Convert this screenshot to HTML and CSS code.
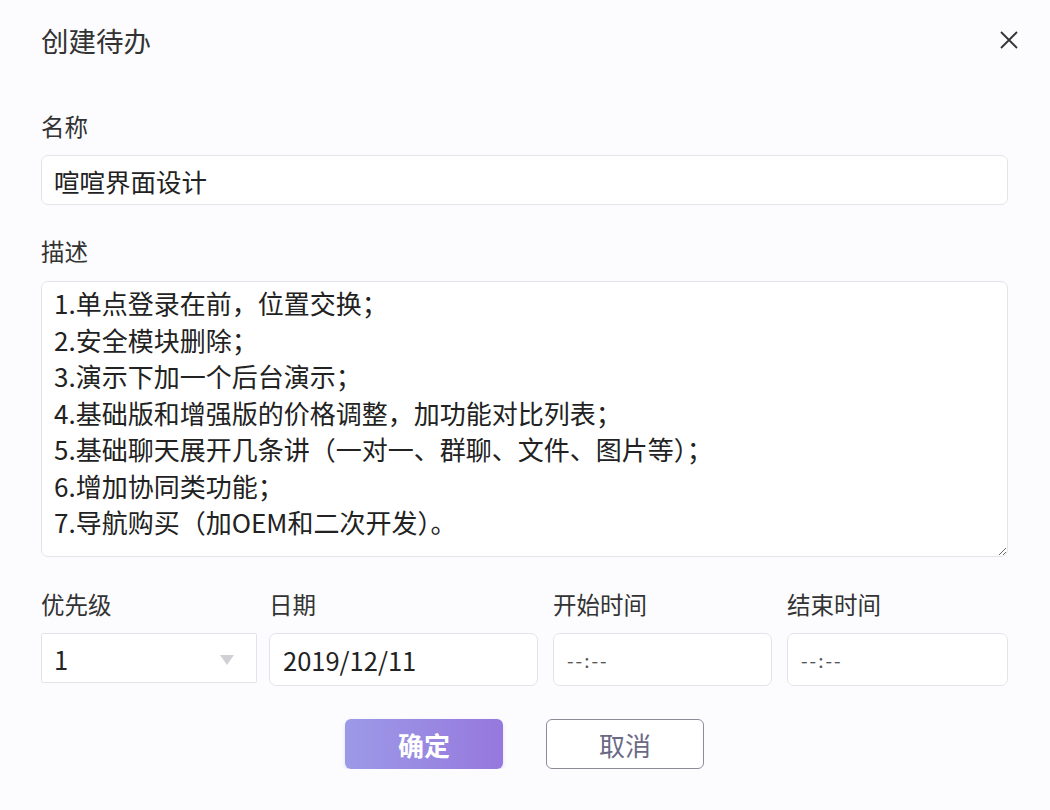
FILE: index.html
```html
<!DOCTYPE html>
<html lang="zh-CN">
<head>
    <meta charset="UTF-8">
    <meta name="viewport" content="width=device-width, initial-scale=1.0">
    <title>创建待办</title>
    <link rel="stylesheet" href="styles.css">
</head>
<body>
    <div class="dialog">
        <div class="dialog-header">
            <h1 class="dialog-title">创建待办</h1>
            <span class="close-btn">
                <svg width="18" height="18" viewBox="0 0 18 18">
                    <path d="M1 1 L17 17 M17 1 L1 17" stroke="#333" stroke-width="1.8" fill="none"/>
                </svg>
            </span>
        </div>

        <form class="todo-form">
            <label class="field-label first">名称</label>
            <input type="text" class="text-input" value="喧喧界面设计">

            <label class="field-label">描述</label>
            <textarea class="text-area">1.单点登录在前，位置交换；
2.安全模块删除；
3.演示下加一个后台演示；
4.基础版和增强版的价格调整，加功能对比列表；
5.基础聊天展开几条讲（一对一、群聊、文件、图片等）；
6.增加协同类功能；
7.导航购买（加OEM和二次开发）。</textarea>

            <div class="field-row">
                <div class="field-col priority">
                    <label class="field-label">优先级</label>
                    <div class="select-box">
                        <span>1</span>
                        <span class="select-arrow"></span>
                    </div>
                </div>
                <div class="field-col">
                    <label class="field-label">日期</label>
                    <input type="text" class="text-input tall" value="2019/12/11">
                </div>
                <div class="field-col">
                    <label class="field-label">开始时间</label>
                    <input type="text" class="text-input tall time" placeholder="--:--">
                </div>
                <div class="field-col">
                    <label class="field-label">结束时间</label>
                    <input type="text" class="text-input tall time" placeholder="--:--">
                </div>
            </div>

            <div class="actions">
                <button type="button" class="btn btn-primary">确定</button>
                <button type="button" class="btn btn-cancel">取消</button>
            </div>
        </form>
    </div>
</body>
</html>
```

FILE: styles.css
```css
body {
    margin: 0;
    padding: 0;
    background-color: #fcfcfe;
    font-family: "Noto Sans CJK SC", "Noto Sans", sans-serif;
    color: #333;
}
.dialog {
    padding: 22px 42px 0 41px;
}
.dialog-header {
    display: flex;
    align-items: center;
    justify-content: space-between;
    height: 36px;
    margin-right: -10px;
}
.dialog-title {
    margin: 0;
    font-size: 27.5px;
    font-weight: normal;
    line-height: 36px;
    color: #333;
}
.close-btn {
    display: flex;
    width: 18px;
    height: 18px;
}
.todo-form {
    display: flex;
    flex-direction: column;
}
.field-label {
    display: block;
    font-size: 23.5px;
    line-height: 30px;
    margin: 31px 0 14px;
    color: #333;
}
.field-label.first {
    margin-top: 53px;
}
.text-input {
    box-sizing: border-box;
    width: 100%;
    height: 50px;
    padding: 0 12px;
    border: 1px solid #e3e3ea;
    border-radius: 7px;
    background-color: #fff;
    font-family: inherit;
    font-size: 25.5px;
    color: #222;
    outline: none;
}
.text-input.tall {
    height: 53px;
    padding: 0 13px;
}
.text-input.time {
    font-size: 19px;
    letter-spacing: 2px;
}
.text-input.time::placeholder {
    color: #555;
}
.text-area {
    box-sizing: border-box;
    width: 100%;
    height: 276px;
    margin-top: 1px;
    padding: 3px 12px;
    border: 1px solid #e3e3ea;
    border-radius: 7px;
    background-color: #fff;
    font-family: inherit;
    font-size: 26px;
    line-height: 36.5px;
    color: #222;
    outline: none;
    resize: both;
}
.field-row {
    display: grid;
    grid-template-columns: 213px 269px 219px 1fr;
    column-gap: 15px;
}
.field-col.priority {
    margin-right: -3px;
}
.field-row .field-label {
    margin-top: 32px;
}
.select-box {
    box-sizing: border-box;
    display: flex;
    align-items: center;
    justify-content: space-between;
    height: 50px;
    padding: 0 22px 0 12px;
    border: 1px solid #e3e3ea;
    border-radius: 2px;
    background-color: #fff;
    font-size: 25.5px;
    color: #222;
}
.select-arrow {
    width: 0;
    height: 0;
    border-left: 7px solid transparent;
    border-right: 7px solid transparent;
    border-top: 10px solid #d0d0d6;
    margin-top: 4px;
}
.actions {
    display: flex;
    justify-content: center;
    gap: 43px;
    margin-top: 33px;
}
.btn {
    width: 158px;
    height: 50px;
    border-radius: 6px;
    font-family: inherit;
    font-size: 26px;
    cursor: pointer;
}
.btn-primary {
    border: none;
    background: linear-gradient(90deg, #9c9ae7, #9678dd);
    color: #fff;
    font-weight: bold;
    box-shadow: 0 2px 4px rgba(120, 100, 200, 0.2);
}
.btn-cancel {
    border: 1px solid #8c8c98;
    background-color: #fff;
    color: #6a6a86;
}
```
